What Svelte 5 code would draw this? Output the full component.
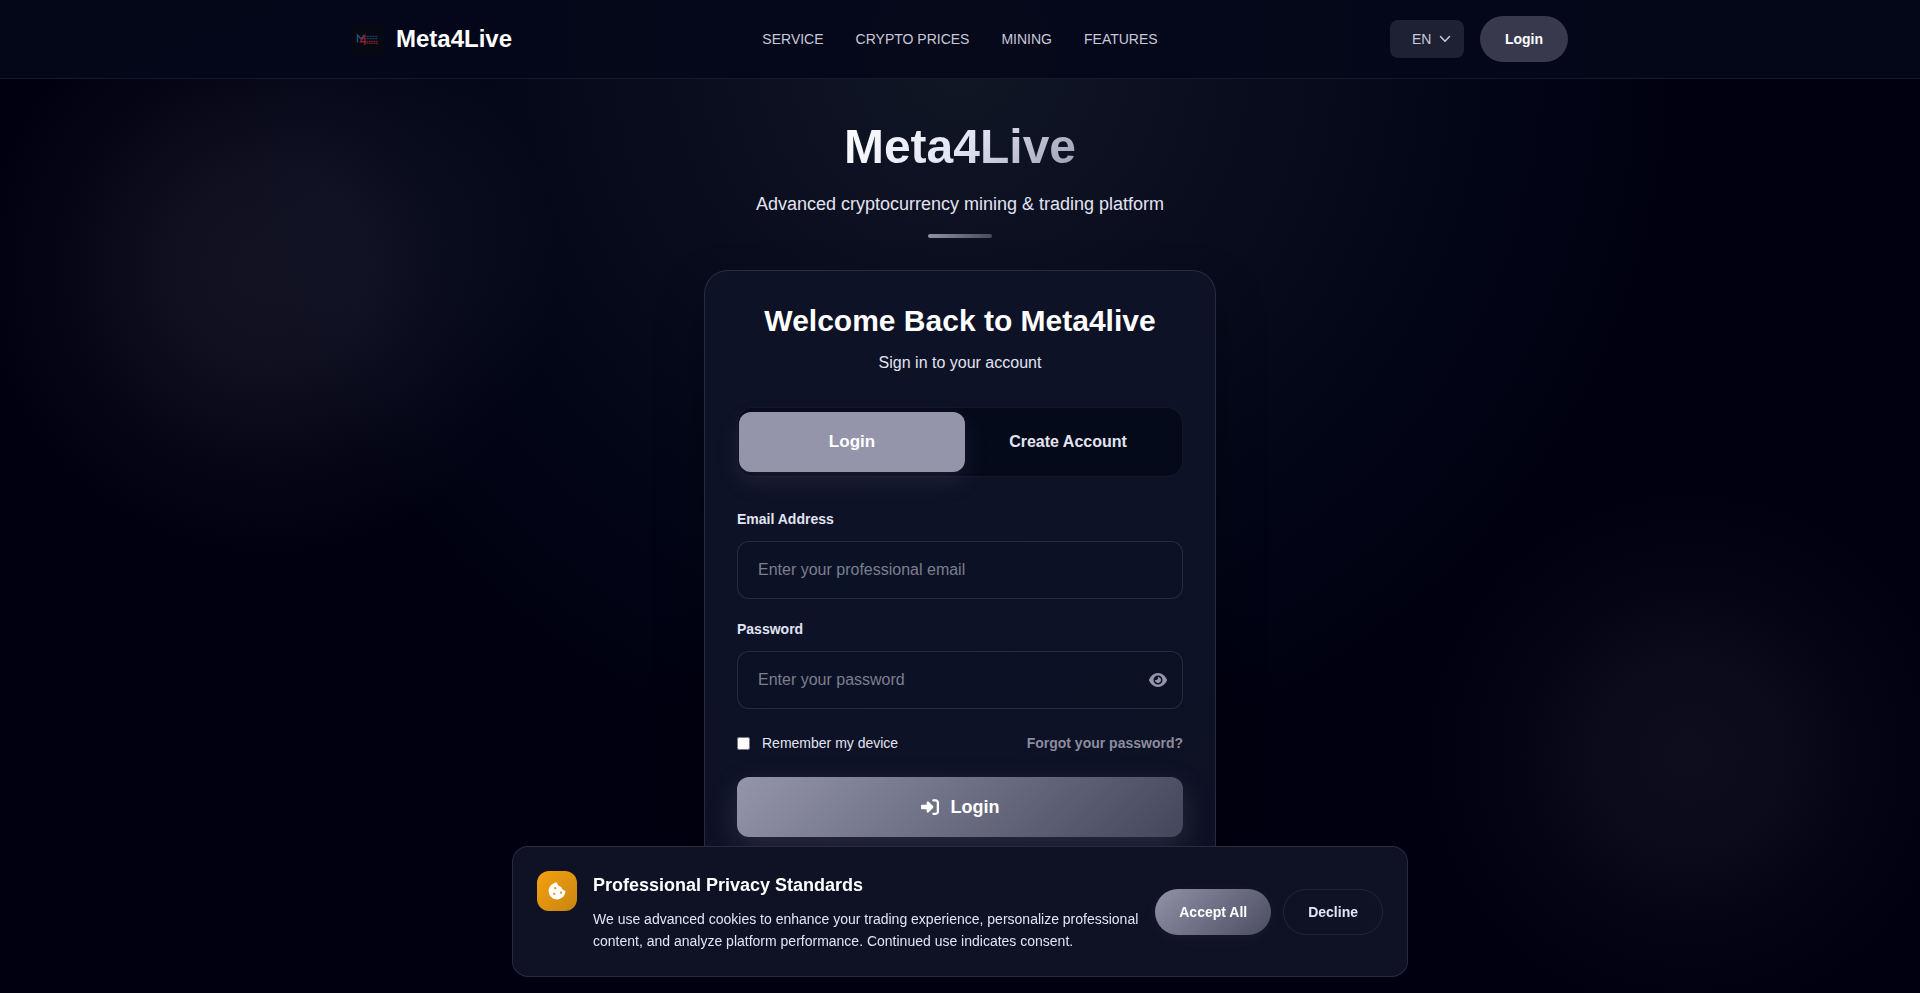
<script lang="ts">
  let mode: "login" | "register" = "login";
  let lang = "en";
  let email = "";
  let password = "";
  let remember = false;
  let showPassword = false;
  let cookiesOpen = true;

  const links = [
    { label: "SERVICE", href: "#service" },
    { label: "CRYPTO PRICES", href: "#prices" },
    { label: "MINING", href: "#mining" },
    { label: "FEATURES", href: "#features" },
  ];
</script>

<div class="page">
  <header>
    <div class="bar">
      <a class="brand" href="#home">
        <svg class="mark" viewBox="0 0 32 32" aria-hidden="true">
          <rect width="32" height="32" rx="6" fill="#060913" />
          <path d="M5.5 19.5v-7.5l3.5 4 3.2-4" fill="none" stroke="#1d5578" stroke-width="1.3" />
          <path d="M12.8 22v-9.5l-4.3 6.3h5.5" fill="none" stroke="#8c2028" stroke-width="1.4" />
          <path d="M14.5 13.3h11M14.5 15.7h11" stroke="#173f5c" stroke-width="1.3" stroke-dasharray="2.2 .7" />
          <path d="M14.5 18.5h11.5M14.5 20.3h11.5" stroke="#701c25" stroke-width="1.3" stroke-dasharray="1.8 .6" />
        </svg>
        <span>Meta4Live</span>
      </a>

      <nav>
        {#each links as link}
          <a href={link.href}>{link.label}</a>
        {/each}
      </nav>

      <div class="actions">
        <div class="lang">
          <select aria-label="Language" bind:value={lang}>
            <option value="en">EN</option>
            <option value="de">DE</option>
            <option value="es">ES</option>
          </select>
          <svg viewBox="0 0 12 12" aria-hidden="true">
            <path d="M1.5 3.5 6 8.2l4.5-4.7" />
          </svg>
        </div>
        <button class="pill ghost" type="button">Login</button>
      </div>
    </div>
  </header>

  <main>
    <h1>Meta4Live</h1>
    <p class="tagline">Advanced cryptocurrency mining &amp; trading platform</p>
    <div class="rule"></div>

    <section class="card">
      <h2>Welcome Back to Meta4live</h2>
      <p class="sub">Sign in to your account</p>

      <div class="tabs">
        <button type="button" class:active={mode === "login"} on:click={() => (mode = "login")}>
          <span>Login</span>
        </button>
        <button type="button" class:active={mode === "register"} on:click={() => (mode = "register")}>
          <span>Create Account</span>
        </button>
      </div>

      <form on:submit|preventDefault>
        <div class="field">
          <label for="email">Email Address</label>
          <input id="email" type="email" placeholder="Enter your professional email" bind:value={email} />
        </div>

        <div class="field">
          <label for="password">Password</label>
          <div class="password">
            {#if showPassword}
              <input id="password" type="text" placeholder="Enter your password" bind:value={password} />
            {:else}
              <input id="password" type="password" placeholder="Enter your password" bind:value={password} />
            {/if}
            <button type="button" aria-label="Show password" on:click={() => (showPassword = !showPassword)}>
              <svg viewBox="0 0 576 512" aria-hidden="true">
                <path
                  d="M288 32c-80.8 0-145.5 36.8-192.6 80.6C48.6 156 17.3 208 2.5 243.7c-3.3 7.9-3.3 16.7 0 24.6C17.3 304 48.6 356 95.4 399.4C142.5 443.2 207.2 480 288 480s145.5-36.8 192.6-80.6c46.8-43.5 78.1-95.4 93-131.1c3.3-7.9 3.3-16.7 0-24.6c-14.9-35.7-46.2-87.7-93-131.1C433.5 68.8 368.8 32 288 32zM144 256a144 144 0 1 1 288 0 144 144 0 1 1-288 0zm144-64c0 35.3-28.7 64-64 64c-7.1 0-13.9-1.2-20.3-3.3c-5.5-1.8-11.9 1.6-11.7 7.4c.3 6.9 1.3 13.8 3.2 20.7c13.7 51.2 66.4 81.6 117.6 67.9s81.6-66.4 67.9-117.6c-11.1-41.5-47.8-69.4-88.6-71.1c-5.8-.2-9.2 6.1-7.4 11.7c2.1 6.4 3.3 13.2 3.3 20.3z"
                />
              </svg>
            </button>
          </div>
        </div>

        <div class="options">
          <label>
            <input type="checkbox" bind:checked={remember} />
            <span>Remember my device</span>
          </label>
          <a href="#forgot">Forgot your password?</a>
        </div>

        <button class="submit" type="submit">
          <svg viewBox="0 0 512 512" aria-hidden="true">
            <path
              d="M217.9 105.9L340.7 228.7c7.2 7.2 11.3 17.1 11.3 27.3s-4.1 20.1-11.3 27.3L217.9 406.1c-6.4 6.4-15 9.9-24 9.9c-18.7 0-33.9-15.2-33.9-33.9l0-62.1L32 320c-17.7 0-32-14.3-32-32l0-64c0-17.7 14.3-32 32-32l128 0 0-62.1c0-18.7 15.2-33.9 33.9-33.9c9 0 17.6 3.6 24 9.9zM352 416l64 0c17.7 0 32-14.3 32-32l0-256c0-17.7-14.3-32-32-32l-64 0c-17.7 0-32-14.3-32-32s14.3-32 32-32l64 0c53 0 96 43 96 96l0 256c0 53-43 96-96 96l-64 0c-17.7 0-32-14.3-32-32s14.3-32 32-32z"
            />
          </svg>
          <span>Login</span>
        </button>
      </form>
    </section>
  </main>

  {#if cookiesOpen}
    <aside class="cookies" aria-label="Cookie consent">
      <div class="badge">
        <svg viewBox="0 0 512 512" aria-hidden="true">
          <path
            d="M257.5 27.6c-.8-5.4-4.9-9.8-10.3-10.6c-22.1-3.1-44.6 .9-64.4 11.4l-74 39.5C89.1 78.4 73.2 94.9 63.4 115L26.7 190.6c-9.8 20.1-13 42.9-9.1 64.9l14.5 82.8c3.9 22.1 14.6 42.3 30.7 57.9l60.3 58.4c16.1 15.6 36.6 25.6 58.7 28.7l83 11.7c22.1 3.1 44.6-.9 64.4-11.4l74-39.5c19.7-10.5 35.6-27 45.4-47.2l36.7-75.5c9.8-20.1 13-42.9 9.1-64.9c-.9-5.3-5.3-9.3-10.6-10.1c-51.5-8.2-92.8-47.1-104.5-97.4c-1.8-7.6-8-13.4-15.7-14.6c-54.6-8.7-97.7-52-106.2-106.8zM208 144a32 32 0 1 1 0 64 32 32 0 1 1 0-64zM144 336a32 32 0 1 1 64 0 32 32 0 1 1-64 0zm224-64a32 32 0 1 1 0 64 32 32 0 1 1 0-64z"
          />
        </svg>
      </div>
      <div class="notice">
        <h3>Professional Privacy Standards</h3>
        <p>
          We use advanced cookies to enhance your trading experience, personalize professional
          content, and analyze platform performance. Continued use indicates consent.
        </p>
      </div>
      <div class="choices">
        <button class="pill solid" type="button" on:click={() => (cookiesOpen = false)}>Accept All</button>
        <button class="pill outline" type="button" on:click={() => (cookiesOpen = false)}>Decline</button>
      </div>
    </aside>
  {/if}
</div>

<style>
  :global(body) {
    margin: 0;
    background: #000010;
  }

  .page {
    --text: #e2e4f3;
    --muted: #9495ab;
    --line: rgba(148, 149, 171, 0.2);

    min-height: 100vh;
    color: var(--text);
    font-family: "Liberation Sans", Arial, sans-serif;
    font-size: 16px;
    line-height: 24px;
    background:
      radial-gradient(circle at 14% 27%, rgba(148, 149, 171, 0.12) 0, rgba(148, 149, 171, 0.1) 100px, rgba(148, 149, 171, 0.04) 200px, transparent 290px),
      radial-gradient(circle at 88% 76%, rgba(148, 149, 171, 0.09) 0, rgba(148, 149, 171, 0.07) 90px, rgba(148, 149, 171, 0.02) 190px, transparent 270px),
      radial-gradient(ellipse 720px 720px at 50% 60px, #111725 0%, #0b0f20 30%, #040819 62%, #000010 100%);
    background-attachment: fixed;
  }

  .page *,
  .page *::before {
    box-sizing: border-box;
  }

  h1,
  h2,
  h3,
  p {
    margin: 0;
  }

  a {
    color: inherit;
    text-decoration: none;
  }

  button,
  input,
  select {
    font: inherit;
    color: inherit;
  }

  button {
    cursor: pointer;
  }

  svg {
    display: block;
    fill: currentColor;
  }

  header {
    position: sticky;
    top: 0;
    z-index: 1;
    background: rgba(4, 8, 26, 0.9);
    border-bottom: 1px solid rgba(148, 149, 171, 0.12);
  }

  .bar {
    display: grid;
    grid-template-columns: 1fr auto 1fr;
    align-items: center;
    max-width: 1280px;
    margin: 0 auto;
    padding: 16px 32px;
  }

  .brand {
    display: flex;
    align-items: center;
    gap: 12px;
    color: #fff;
    font-size: 24px;
    font-weight: bold;
  }

  .mark {
    width: 32px;
    height: 32px;
  }

  nav {
    display: flex;
    gap: 32px;
    color: #c8cadb;
    font-size: 14px;
  }

  .actions {
    display: flex;
    align-items: center;
    justify-content: flex-end;
    gap: 16px;
  }

  .lang {
    position: relative;
    color: #c8cadb;
  }

  .lang select {
    display: block;
    width: 74px;
    height: 38px;
    padding: 0 32px 0 22px;
    border: 0;
    border-radius: 8px;
    background: #1e2033;
    font-size: 14px;
    appearance: none;
  }

  .lang svg {
    position: absolute;
    top: 13px;
    right: 13px;
    width: 12px;
    height: 12px;
    fill: none;
    stroke: currentColor;
    stroke-width: 1.5;
    stroke-linecap: round;
    stroke-linejoin: round;
    pointer-events: none;
  }

  .pill {
    height: 46px;
    padding: 0 24px;
    border: 1px solid transparent;
    border-radius: 23px;
    font-size: 14px;
    font-weight: bold;
    white-space: nowrap;
  }

  .ghost {
    background: #38394d;
    color: #fff;
  }

  .solid {
    border: 0;
    background: linear-gradient(135deg, #9192a8, #4b4c60);
    box-shadow: 0 4px 16px rgba(148, 149, 171, 0.06);
    color: #fff;
  }

  .outline {
    border-color: rgba(148, 149, 171, 0.15);
    background: transparent;
  }

  main {
    display: flex;
    flex-direction: column;
    align-items: center;
    padding: 32px 16px 48px;
  }

  h1 {
    font-size: 48px;
    line-height: 72px;
    background: linear-gradient(135deg, #fff 0%, #e2e5f3 50%, #9495ab 100%);
    background-clip: text;
    -webkit-background-clip: text;
    color: transparent;
  }

  .tagline {
    margin-top: 8px;
    font-size: 18px;
    line-height: 27px;
  }

  .rule {
    width: 64px;
    height: 4px;
    margin: 16px 0 32px;
    border-radius: 2px;
    background: linear-gradient(90deg, #9192a8, #48495e);
  }

  .card {
    width: 100%;
    max-width: 512px;
    padding: 32px;
    border: 1px solid var(--line);
    border-radius: 24px;
    background: linear-gradient(145deg, #0e1225, #0d1227 45%, #0d1123);
    box-shadow: 0 24px 48px rgba(0, 0, 8, 0.4);
    text-align: center;
  }

  h2 {
    color: #fff;
    font-size: 30px;
    line-height: 36px;
  }

  .sub {
    margin-top: 12px;
  }

  .tabs {
    display: flex;
    margin: 32px 0;
    padding: 6px;
    border: 1px solid rgba(148, 149, 171, 0.1);
    border-radius: 16px;
    background: #050a1b;
  }

  .tabs button {
    position: relative;
    flex: 1;
    padding: 16px;
    border: 0;
    background: none;
    font-weight: bold;
  }

  .tabs span {
    position: relative;
  }

  .tabs .active {
    color: #fff;
    font-size: 17px;
  }

  /* The selected tab grows a little past its slot */
  .tabs .active::before {
    content: "";
    position: absolute;
    inset: -2px -5px;
    border-radius: 12px;
    background: #9495ab;
    box-shadow: 0 10px 24px rgba(148, 149, 171, 0.12);
  }

  form {
    text-align: left;
  }

  .field {
    margin-bottom: 20px;
  }

  .field label {
    display: block;
    margin-bottom: 12px;
    font-size: 14px;
    font-weight: bold;
    line-height: 20px;
  }

  .field input {
    display: block;
    width: 100%;
    height: 58px;
    padding: 0 20px;
    border: 1px solid var(--line);
    border-radius: 12px;
    background: rgba(12, 18, 36, 0.6);
    outline: none;
  }

  .field input:focus {
    border-color: var(--muted);
  }

  .field input::placeholder {
    color: #7b7e8f;
    opacity: 1;
  }

  .password {
    position: relative;
  }

  .password input {
    padding-right: 48px;
  }

  .password button {
    position: absolute;
    top: 50%;
    right: 16px;
    padding: 0;
    border: 0;
    background: none;
    color: var(--muted);
    transform: translateY(-50%);
  }

  .password svg {
    width: 18px;
    height: 16px;
  }

  .options {
    display: flex;
    align-items: center;
    justify-content: space-between;
    margin: 24px 0;
    font-size: 14px;
    line-height: 20px;
  }

  .options label {
    display: flex;
    align-items: center;
    gap: 12px;
  }

  .options input {
    width: 13px;
    height: 13px;
    margin: 0;
  }

  .options a {
    color: #8b8c9f;
    font-weight: bold;
  }

  .submit {
    display: flex;
    align-items: center;
    justify-content: center;
    gap: 12px;
    width: 100%;
    height: 60px;
    border: 0;
    border-radius: 12px;
    background: linear-gradient(135deg, #9495ab, #44465a);
    box-shadow: 0 10px 30px rgba(148, 149, 171, 0.2);
    color: #fff;
    font-size: 18px;
    font-weight: bold;
  }

  .submit svg {
    width: 18px;
    height: 18px;
  }

  .cookies {
    position: fixed;
    bottom: 16px;
    left: 16px;
    right: 16px;
    z-index: 2;
    display: flex;
    gap: 16px;
    max-width: 896px;
    margin: 0 auto;
    padding: 24px;
    border: 1px solid var(--line);
    border-radius: 16px;
    background: #0e1224;
  }

  .badge {
    display: grid;
    flex: none;
    place-items: center;
    width: 40px;
    height: 40px;
    border-radius: 12px;
    background: linear-gradient(135deg, #f5a110, #c98410);
    color: #fff;
  }

  .badge svg {
    width: 18px;
    height: 18px;
  }

  .notice {
    flex: 1;
  }

  .notice h3 {
    margin-bottom: 8px;
    color: #fff;
    font-size: 18px;
    line-height: 29px;
  }

  .notice p {
    font-size: 14px;
    line-height: 22px;
  }

  .choices {
    display: flex;
    align-items: center;
    gap: 12px;
  }
</style>
